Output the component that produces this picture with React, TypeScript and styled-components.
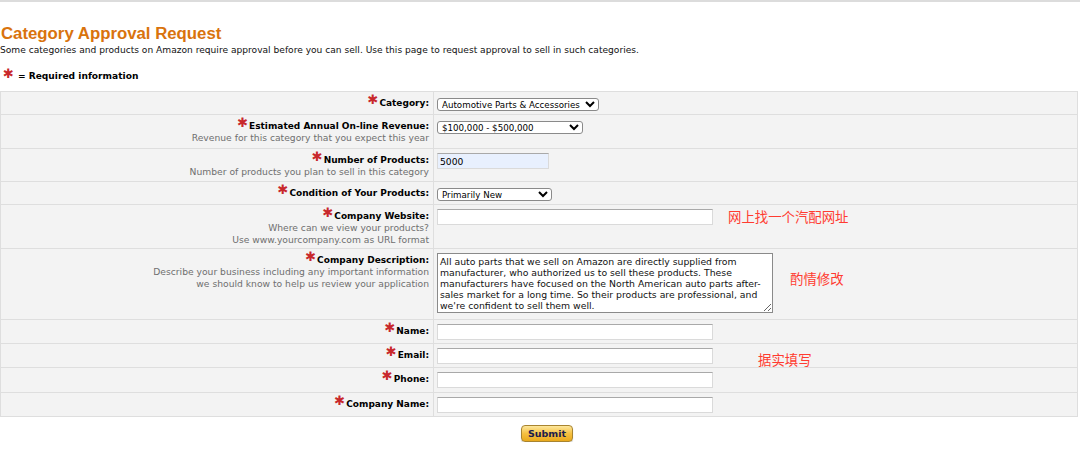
import React from "react";
import styled, { createGlobalStyle } from "styled-components";

const Global = createGlobalStyle`
  html, body { margin: 0; padding: 0; background: #fff; }
  body { font-family: "DejaVu Sans", Verdana, sans-serif; font-size: 9px; color: #000; }
`;

const Page = styled.div`
  border-top: 2px solid #dcdcdc;
  padding: 22px 0 0 0;
  width: 1080px;
  box-sizing: border-box;
`;

const Title = styled.h1`
  margin: 0;
  font-family: "Liberation Sans", Arial, sans-serif;
  font-weight: bold;
  font-size: 16.8px;
  line-height: 19px;
  color: #d9730d;
  padding-left: 1px;
`;

const Intro = styled.p`
  margin: 0 0 0 0;
  padding-top: 1px;
  font-size: 9.1px;
  line-height: 12px;
  color: #111;
`;

const Legend = styled.div`
  margin: 12px 0 0 3px;
  display: flex;
  align-items: center;
  gap: 3px;
  font-weight: bold;
  font-size: 9.1px;
  height: 16px;
`;

const Star = styled.span`
  color: #c8282c;
  font-size: 13px;
  font-weight: bold;
  line-height: 10px;
  position: relative;
  top: -2px;
  margin-right: 1px;
`;

const Table = styled.table`
  margin-top: 7px;
  width: 1078px;
  border-collapse: collapse;
  background: #f3f3f3;
  border: 1px solid #dedede;
`;

const Row = styled.tr<{ $h: number }>`
  height: ${(p) => p.$h}px;
  border-bottom: 1px solid #dedede;
`;

const LabelCell = styled.td`
  width: 428px;
  text-align: right;
  vertical-align: top;
  padding: 5px 4px 0 0;
  border-right: 1px solid #dedede;
`;

const FieldCell = styled.td`
  vertical-align: top;
  padding: 4px 0 0 3px;
`;

const LabelText = styled.div`
  font-weight: bold;
  font-size: 9px;
  line-height: 12px;
`;

const Hint = styled.div`
  color: #6f6f6f;
  font-size: 9.2px;
  line-height: 11.5px;
`;

const FieldLine = styled.div`
  display: flex;
  align-items: flex-start;
`;

const Select = styled.select<{ $w: number }>`
  width: ${(p) => p.$w}px;
  height: 13px;
  font-family: "DejaVu Sans", Verdana, sans-serif;
  font-size: 8.7px;
  padding: 0;
  margin-top: 2px;
  border: 1px solid #8a8a8a;
  border-radius: 3px;
  background: #fff;
  color: #000;
  box-sizing: border-box;
  line-height: 11px;
`;

const Input = styled.input<{ $w: number; $filled?: boolean }>`
  width: ${(p) => p.$w}px;
  height: 16px;
  box-sizing: border-box;
  font-family: "DejaVu Sans", Verdana, sans-serif;
  font-size: 9.2px;
  padding: 0 2px;
  border: 1px solid #dadada;
  border-top-color: #a9a9a9;
  background: ${(p) => (p.$filled ? "#e8f0fe" : "#fff")};
  color: #000;
  outline: none;
`;

const TextArea = styled.textarea`
  width: 336px;
  height: 60px;
  box-sizing: border-box;
  font-family: "DejaVu Sans", Verdana, sans-serif;
  font-size: 9.3px;
  line-height: 11px;
  padding: 2px 2px;
  border: 1px solid #8a8a8a;
  color: #111;
  background: #fff;
  overflow: hidden;
`;

const Note = styled.span<{ $dx: number; $dy: number }>`
  font-family: "Noto Sans CJK SC", sans-serif;
  color: #ff3b30;
  font-size: 13.4px;
  line-height: 15px;
  margin-left: ${(p) => p.$dx}px;
  margin-top: ${(p) => p.$dy}px;
`;

const Actions = styled.div`
  display: flex;
  justify-content: flex-start;
  padding: 8px 0 0 521px;
`;

const Submit = styled.button`
  width: 52px;
  height: 17px;
  padding: 0;
  font-family: "DejaVu Sans", Verdana, sans-serif;
  font-weight: bold;
  font-size: 9.5px;
  color: #1b1b4d;
  border: 1px solid #a88430;
  border-radius: 4px;
  background: linear-gradient(#fde79c, #f5c042 50%, #e9a91c);
  box-shadow: 0 1px 1px rgba(0, 0, 0, 0.2);
`;

const description =
  "All auto parts that we sell on Amazon are directly supplied from manufacturer, who authorized us to sell these products. These manufacturers have focused on the North American auto parts after-sales market for a long time. So their products are professional, and we're confident to sell them well.";

const Label: React.FC<{ text: string; hints?: string[] }> = ({ text, hints }) => (
  <LabelCell>
    <LabelText>
      <Star>✱</Star>
      {text}
    </LabelText>
    {hints?.map((h) => (
      <Hint key={h}>{h}</Hint>
    ))}
  </LabelCell>
);

export default function App() {
  return (
    <>
      <Global />
      <Page>
        <Title>Category Approval Request</Title>
        <Intro>
          Some categories and products on Amazon require approval before you can sell. Use this page to request approval to sell in such categories.
        </Intro>
        <Legend>
          <Star>✱</Star>= Required information
        </Legend>
        <Table>
          <tbody>
            <Row $h={23}>
              <Label text="Category:" />
              <FieldCell>
                <Select $w={162} defaultValue="auto">
                  <option value="auto">Automotive Parts &amp; Accessories</option>
                </Select>
              </FieldCell>
            </Row>
            <Row $h={34}>
              <Label text="Estimated Annual On-line Revenue:" hints={["Revenue for this category that you expect this year"]} />
              <FieldCell>
                <Select $w={146} defaultValue="r">
                  <option value="r">$100,000 - $500,000</option>
                </Select>
              </FieldCell>
            </Row>
            <Row $h={33}>
              <Label text="Number of Products:" hints={["Number of products you plan to sell in this category"]} />
              <FieldCell>
                <Input $w={112} $filled defaultValue="5000" />
              </FieldCell>
            </Row>
            <Row $h={23}>
              <Label text="Condition of Your Products:" />
              <FieldCell>
                <Select $w={115} defaultValue="n">
                  <option value="n">Primarily New</option>
                </Select>
              </FieldCell>
            </Row>
            <Row $h={44}>
              <Label text="Company Website:" hints={["Where can we view your products?", "Use www.yourcompany.com as URL format"]} />
              <FieldCell>
                <FieldLine>
                  <Input $w={276} />
                  <Note $dx={15} $dy={0}>网上找一个汽配网址</Note>
                </FieldLine>
              </FieldCell>
            </Row>
            <Row $h={71}>
              <Label
                text="Company Description:"
                hints={["Describe your business including any important information", "we should know to help us review your application"]}
              />
              <FieldCell>
                <FieldLine>
                  <TextArea defaultValue={description} />
                  <Note $dx={17} $dy={18}>酌情修改</Note>
                </FieldLine>
              </FieldCell>
            </Row>
            <Row $h={24}>
              <Label text="Name:" />
              <FieldCell>
                <Input $w={276} />
              </FieldCell>
            </Row>
            <Row $h={24}>
              <Label text="Email:" />
              <FieldCell>
                <FieldLine>
                  <Input $w={276} />
                  <Note $dx={45} $dy={4}>据实填写</Note>
                </FieldLine>
              </FieldCell>
            </Row>
            <Row $h={25}>
              <Label text="Phone:" />
              <FieldCell>
                <Input $w={276} />
              </FieldCell>
            </Row>
            <Row $h={24}>
              <Label text="Company Name:" />
              <FieldCell>
                <Input $w={276} />
              </FieldCell>
            </Row>
          </tbody>
        </Table>
        <Actions>
          <Submit type="button">Submit</Submit>
        </Actions>
      </Page>
    </>
  );
}
